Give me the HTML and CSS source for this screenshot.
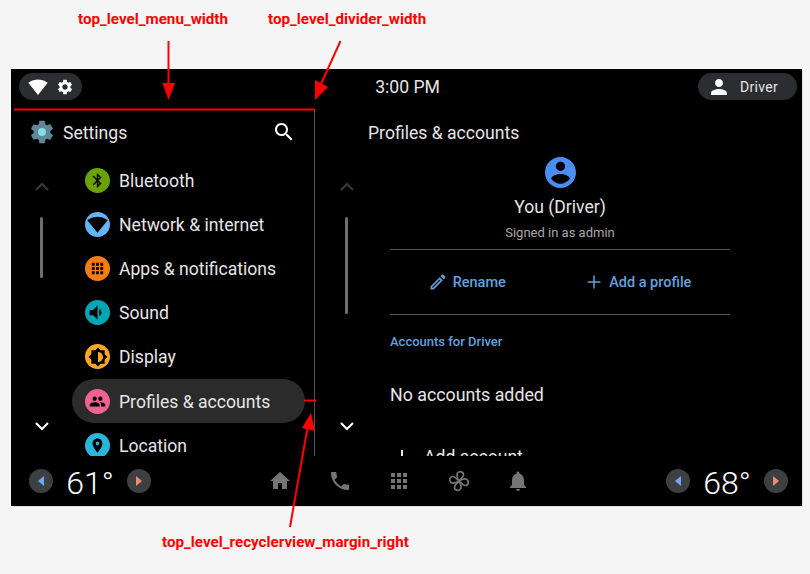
FILE: index.html
```html
<!DOCTYPE html>
<html lang="en">
<head>
<meta charset="utf-8">
<title>Settings layout</title>
<link rel="stylesheet" href="styles.css">
</head>
<body>
<main class="screen">
  <header class="topbar">
    <div class="pill status-pill">
      <svg class="icon-wifi" viewBox="0 0 24 24"><path d="M12.01 21.49L23.64 7c-.45-.34-4.93-4-11.64-4C5.28 3 .81 6.66.36 7l11.63 14.49.01.01.01-.01z"/></svg>
      <svg class="icon-gear" viewBox="0 0 24 24"><path d="M19.14 12.94c.04-.3.06-.61.06-.94 0-.32-.02-.64-.07-.94l2.03-1.58c.18-.14.23-.41.12-.61l-1.92-3.32c-.12-.22-.37-.29-.59-.22l-2.39.96c-.5-.38-1.03-.7-1.62-.94l-.36-2.54c-.04-.24-.24-.41-.48-.41h-3.84c-.24 0-.43.17-.47.41l-.36 2.54c-.59.24-1.13.57-1.62.94l-2.39-.96c-.22-.08-.47 0-.59.22L2.74 8.87c-.12.21-.08.47.12.61l2.03 1.58c-.05.3-.09.63-.09.94s.02.64.07.94l-2.03 1.58c-.18.14-.23.41-.12.61l1.92 3.32c.12.22.37.29.59.22l2.39-.96c.5.38 1.03.7 1.62.94l.36 2.54c.05.24.24.41.48.41h3.84c.24 0 .44-.17.47-.41l.36-2.54c.59-.24 1.13-.56 1.62-.94l2.39.96c.22.08.47 0 .59-.22l1.92-3.32c.12-.22.07-.47-.12-.61l-2.01-1.58zM12 15.6c-1.98 0-3.6-1.62-3.6-3.6s1.62-3.6 3.6-3.6 3.6 1.62 3.6 3.6-1.62 3.6-3.6 3.6z"/></svg>
    </div>
    <div class="clock">3:00 PM</div>
    <div class="pill driver-pill">
      <svg class="icon-person" viewBox="0 0 24 24"><path d="M12 12c2.21 0 4-1.79 4-4s-1.79-4-4-4-4 1.79-4 4 1.79 4 4 4zm0 2c-2.67 0-8 1.34-8 4v2h16v-2c0-2.66-5.33-4-8-4z"/></svg>
      <span>Driver</span>
    </div>
  </header>

  <div class="panes">
    <section class="menu">
      <div class="menu-head">
        <svg class="icon-settings" viewBox="0 0 24 24"><path d="M19.14 12.94c.04-.3.06-.61.06-.94 0-.32-.02-.64-.07-.94l2.03-1.58c.18-.14.23-.41.12-.61l-1.92-3.32c-.12-.22-.37-.29-.59-.22l-2.39.96c-.5-.38-1.03-.7-1.62-.94l-.36-2.54c-.04-.24-.24-.41-.48-.41h-3.84c-.24 0-.43.17-.47.41l-.36 2.54c-.59.24-1.13.57-1.62.94l-2.39-.96c-.22-.08-.47 0-.59.22L2.74 8.87c-.12.21-.08.47.12.61l2.03 1.58c-.05.3-.09.63-.09.94s.02.64.07.94l-2.03 1.58c-.18.14-.23.41-.12.61l1.92 3.32c.12.22.37.29.59.22l2.39-.96c.5.38 1.03.7 1.62.94l.36 2.54c.05.24.24.41.48.41h3.84c.24 0 .44-.17.47-.41l.36-2.54c.59-.24 1.13-.56 1.62-.94l2.39.96c.22.08.47 0 .59-.22l1.92-3.32c.12-.22.07-.47-.12-.61l-2.01-1.58z"/><circle class="settings-core" cx="12" cy="12" r="3.4"/></svg>
        <span class="menu-title">Settings</span>
        <svg class="icon-search" viewBox="0 0 24 24"><path d="M15.5 14h-.79l-.28-.27C15.41 12.59 16 11.11 16 9.5 16 5.91 13.09 3 9.5 3S3 5.91 3 9.5 5.91 16 9.5 16c1.61 0 3.09-.59 4.23-1.57l.27.28v.79l5 4.99L20.49 19l-4.99-5zm-6 0C7.01 14 5 11.99 5 9.5S7.01 5 9.5 5 14 7.01 14 9.5 11.99 14 9.5 14z"/></svg>
      </div>
      <div class="pane-body">
        <div class="rail">
          <svg class="chev chev-off" viewBox="0 0 24 24"><path d="M6 15l6-6 6 6"/></svg>
          <div class="track"><div class="thumb thumb-short"></div></div>
          <svg class="chev" viewBox="0 0 24 24"><path d="M6 9l6 6 6-6"/></svg>
        </div>
        <ul class="list">
          <li class="row"><span class="tile tile-bt"><svg viewBox="0 0 24 24"><path d="M17.71 7.71L12 2h-1v7.59L6.41 5 5 6.41 10.59 12 5 17.59 6.41 19 11 14.41V22h1l5.71-5.71-4.3-4.29 4.3-4.29zM13 5.83l1.88 1.88L13 9.59V5.83zm1.88 10.46L13 18.17v-3.76l1.88 1.88z"/></svg></span><span class="row-label">Bluetooth</span></li>
          <li class="row"><span class="tile tile-net"><svg viewBox="0 0 24 24"><path d="M12.01 21.49L23.64 7c-.45-.34-4.93-4-11.64-4C5.28 3 .81 6.66.36 7l11.63 14.49.01.01.01-.01z"/></svg></span><span class="row-label">Network &amp; internet</span></li>
          <li class="row"><span class="tile tile-apps"><svg viewBox="0 0 24 24"><path d="M4 8h4V4H4v4zm6 12h4v-4h-4v4zm-6 0h4v-4H4v4zm0-6h4v-4H4v4zm6 0h4v-4h-4v4zm6-10v4h4V4h-4zm-6 4h4V4h-4v4zm6 6h4v-4h-4v4zm0 6h4v-4h-4v4z"/></svg></span><span class="row-label">Apps &amp; notifications</span></li>
          <li class="row"><span class="tile tile-sound"><svg viewBox="0 0 24 24"><path d="M3 9v6h4l5 5V4L7 9H3zm13.5 3c0-1.77-1.02-3.29-2.5-4.03v8.05c1.48-.73 2.5-2.25 2.5-4.02z"/></svg></span><span class="row-label">Sound</span></li>
          <li class="row"><span class="tile tile-display"><svg viewBox="0 0 24 24"><path d="M20 15.31L23.31 12 20 8.69V4h-4.69L12 .69 8.69 4H4v4.69L.69 12 4 15.31V20h4.69L12 23.31 15.31 20H20v-4.69zM12 18V6c3.31 0 6 2.69 6 6s-2.69 6-6 6z"/></svg></span><span class="row-label">Display</span></li>
          <li class="row row-active"><span class="tile tile-profile"><svg viewBox="0 0 24 24"><path d="M16 11c1.66 0 2.99-1.34 2.99-3S17.66 5 16 5c-1.66 0-3 1.34-3 3s1.34 3 3 3zm-8 0c1.66 0 2.99-1.34 2.99-3S9.66 5 8 5C6.34 5 5 6.34 5 8s1.34 3 3 3zm0 2c-2.33 0-7 1.17-7 3.5V19h14v-2.5c0-2.33-4.67-3.5-7-3.5zm8 0c-.29 0-.62.02-.97.05 1.16.84 1.97 1.97 1.97 3.45V19h6v-2.5c0-2.33-4.67-3.5-7-3.5z"/></svg></span><span class="row-label">Profiles &amp; accounts</span></li>
          <li class="row"><span class="tile tile-loc"><svg viewBox="0 0 24 24"><path d="M12 2C8.13 2 5 5.13 5 9c0 5.25 7 13 7 13s7-7.75 7-13c0-3.87-3.13-7-7-7zm0 9.5c-1.38 0-2.5-1.12-2.5-2.5s1.12-2.5 2.5-2.5 2.5 1.12 2.5 2.5-1.12 2.5-2.5 2.5z"/></svg></span><span class="row-label">Location</span></li>
        </ul>
      </div>
    </section>

    <section class="detail">
      <h1 class="detail-title">Profiles &amp; accounts</h1>
      <div class="pane-body">
        <div class="rail">
          <svg class="chev chev-off" viewBox="0 0 24 24"><path d="M6 15l6-6 6 6"/></svg>
          <div class="track"><div class="thumb thumb-long"></div></div>
          <svg class="chev" viewBox="0 0 24 24"><path d="M6 9l6 6 6-6"/></svg>
        </div>
        <div class="content">
          <div class="profile">
            <svg class="avatar" viewBox="2 2 20 20"><path d="M12 2C6.48 2 2 6.48 2 12s4.48 10 10 10 10-4.48 10-10S17.52 2 12 2zm0 3c1.66 0 3 1.34 3 3s-1.34 3-3 3-3-1.34-3-3 1.34-3 3-3zm0 14.2c-2.5 0-4.71-1.28-6-3.22.03-1.99 4-3.08 6-3.08 1.99 0 5.97 1.09 6 3.08-1.29 1.94-3.5 3.22-6 3.22z"/></svg>
            <div class="profile-name">You (Driver)</div>
            <div class="profile-sub">Signed in as admin</div>
          </div>
          <div class="actions">
            <div class="action"><svg class="icon-pencil" viewBox="0 0 24 24"><path d="M3 17.25V21h3.75L17.81 9.94l-3.75-3.75L3 17.25zM5.92 19H5v-.92l9.06-9.06.92.92L5.92 19zM20.71 7.04c.39-.39.39-1.02 0-1.41l-2.34-2.34c-.39-.39-1.02-.39-1.41 0l-1.83 1.83 3.75 3.75 1.83-1.83z"/></svg>Rename</div>
            <div class="action"><svg class="icon-plus" viewBox="0 0 24 24"><path d="M19 12.800h-6.200V19h-1.600v-6.200H5v-1.600h6.200V5h1.600v6.200H19z"/></svg>Add a profile</div>
          </div>
          <div class="section-label">Accounts for Driver</div>
          <div class="empty">No accounts added</div>
          <div class="add-account"><svg viewBox="0 0 24 24"><path d="M19 13h-6v6h-2v-6H5v-2h6V5h2v6h6v2z"/></svg>Add account</div>
        </div>
      </div>
    </section>
  </div>

  <footer class="bottombar">
    <div class="temp">
      <span class="temp-btn"><i class="tri tri-left"></i></span>
      <span class="temp-val">61°</span>
      <span class="temp-btn"><i class="tri tri-right"></i></span>
    </div>
    <nav class="nav">
      <svg viewBox="0 0 24 24"><path d="M10 20v-6h4v6h5v-8h3L12 3 2 12h3v8z"/></svg>
      <svg viewBox="0 0 24 24"><path d="M6.62 10.79c1.44 2.83 3.76 5.14 6.59 6.59l2.2-2.2c.27-.27.67-.36 1.02-.24 1.12.37 2.33.57 3.57.57.55 0 1 .45 1 1V20c0 .55-.45 1-1 1-9.39 0-17-7.61-17-17 0-.55.45-1 1-1h3.5c.55 0 1 .45 1 1 0 1.25.2 2.45.57 3.57.11.35.03.74-.25 1.02l-2.2 2.2z"/></svg>
      <svg viewBox="0 0 24 24"><path d="M4 8h4V4H4v4zm6 12h4v-4h-4v4zm-6 0h4v-4H4v4zm0-6h4v-4H4v4zm6 0h4v-4h-4v4zm6-10v4h4V4h-4zm-6 4h4V4h-4v4zm6 6h4v-4h-4v4zm0 6h4v-4h-4v4z"/></svg>
      <svg class="fan" viewBox="0 0 24 24"><path d="M12 12C10.500 9.500 9 6.500 10.500 4 12.300 1.800 16.500 2.500 16.500 5.800 16.500 8.500 13.500 9.800 12 12z"/><path transform="rotate(90 12 12)" d="M12 12C10.500 9.500 9 6.500 10.500 4 12.300 1.800 16.500 2.500 16.500 5.800 16.500 8.500 13.500 9.800 12 12z"/><path transform="rotate(180 12 12)" d="M12 12C10.500 9.500 9 6.500 10.500 4 12.300 1.800 16.500 2.500 16.500 5.800 16.500 8.500 13.500 9.800 12 12z"/><path transform="rotate(270 12 12)" d="M12 12C10.500 9.500 9 6.500 10.500 4 12.300 1.800 16.500 2.500 16.500 5.800 16.500 8.500 13.500 9.800 12 12z"/></svg>
      <svg viewBox="0 0 24 24"><path d="M12 22c1.1 0 2-.9 2-2h-4c0 1.1.89 2 2 2zm6-6v-5c0-3.07-1.64-5.64-4.5-6.32V4c0-.83-.67-1.5-1.5-1.5s-1.5.67-1.5 1.5v.68C7.63 5.36 6 7.92 6 11v5l-2 2v1h16v-1l-2-2z"/></svg>
    </nav>
    <div class="temp temp-end">
      <span class="temp-btn"><i class="tri tri-left"></i></span>
      <span class="temp-val">68°</span>
      <span class="temp-btn"><i class="tri tri-right"></i></span>
    </div>
  </footer>
</main>

<div class="note note-menu">top_level_menu_width</div>
<div class="note note-divider">top_level_divider_width</div>
<div class="note note-margin">top_level_recyclerview_margin_right</div>
<svg class="marks" viewBox="0 0 810 574">
  <path class="mark-line" d="M168.500 41V85"/>
  <path class="mark-head" d="M162.500 83H175L168.500 100z"/>
  <path class="mark-line" d="M340.500 41L321 84"/>
  <path class="mark-head" d="M315 80L328 87L315 100z"/>
  <path class="mark-line" d="M14 109.500H315"/>
  <path class="mark-line" d="M304 400.500H316"/>
  <path class="mark-line" d="M290 527L308 425"/>
  <path class="mark-head" d="M302 428L315 431L311 413z"/>
</svg>
</body>
</html>
```

FILE: styles.css
```css
* { box-sizing: border-box; }

html, body { margin: 0; padding: 0; }

body {
  position: relative;
  width: 810px;
  height: 574px;
  overflow: hidden;
  background: #f5f5f5;
  font-family: Roboto, "Liberation Sans", sans-serif;
  color: #e6e6e6;
}

.screen {
  display: flex;
  flex-direction: column;
  width: 791px;
  height: 437px;
  margin: 0 0 0 11px;
  position: relative;
  top: 69px;
  background: #000;
  box-shadow: 1px 1px 0 #e0e0e0;
}

/* top bar */
.topbar {
  flex: none;
  height: 41px;
  padding: 4px 5px 0 8px;
  display: grid;
  grid-template-columns: 1fr auto 1fr;
  align-items: start;
}

.pill {
  height: 27px;
  border-radius: 14px;
  background: #2b2d30;
  display: flex;
  align-items: center;
}

.status-pill {
  width: 63px;
  padding-left: 9px;
  gap: 8px;
}

.icon-wifi { width: 20px; height: 20px; fill: #fff; }
.icon-gear { width: 18px; height: 18px; fill: #fff; }

.clock {
  font-size: 17.600px;
  line-height: 29px;
  padding-right: 1px;
}

.driver-pill {
  width: 99px;
  justify-self: end;
  padding-left: 9px;
  gap: 9px;
  font-size: 14px;
  letter-spacing: 0.3px;
}

.icon-person { width: 24px; height: 24px; fill: #fff; }

/* panes */
.panes {
  flex: 1;
  min-height: 0;
  display: flex;
}

.menu {
  flex: none;
  width: 304px;
  display: flex;
  flex-direction: column;
  border-right: 1px solid #555;
}

.menu-head {
  flex: none;
  height: 48px;
  padding: 0 18px 4px 16.500px;
  display: flex;
  align-items: center;
}

.icon-settings { width: 28px; height: 28px; fill: #5f8797; flex: none; }
.settings-core { fill: #85dfe0; }

.menu-title {
  margin-left: 7.500px;
  padding-top: 2px;
  font-size: 17.600px;
  flex: 1;
}

.icon-search { width: 24px; height: 24px; fill: #fff; }

.pane-body {
  flex: 1;
  min-height: 0;
  display: flex;
  overflow: hidden;
}

.rail {
  flex: none;
  width: 61px;
  padding: 17px 0 18px;
  display: flex;
  flex-direction: column;
  align-items: center;
}

.chev {
  flex: none;
  width: 24px;
  height: 24px;
  fill: none;
  stroke: #fff;
  stroke-width: 2;
}

.chev-off { stroke: #3a3a3a; }

.track {
  flex: 1;
  width: 3px;
  margin: 18px 0;
}

.thumb {
  width: 3px;
  border-radius: 2px;
  background: #6e6e6e;
}

.thumb-short { height: 61px; }
.thumb-long { height: 97px; }

.list {
  flex: 1;
  margin: 0 9px 0 0;
  padding: 0;
  list-style: none;
}

.row {
  height: 44.200px;
  padding-left: 13px;
  display: flex;
  align-items: center;
  gap: 9px;
  font-size: 17.600px;
  border-radius: 22px;
}

.row-label { padding-top: 1px; }

.row-active { background: #2b2b2b; }

.tile {
  flex: none;
  width: 25px;
  height: 25px;
  border-radius: 50%;
  display: flex;
  align-items: center;
  justify-content: center;
}

.tile svg { width: 17px; height: 17px; fill: #000; }
.tile-bt { background: #6aa300; }
.tile-net { background: #64b5f6; }
.tile-net svg { width: 21px; height: 21px; }
.tile-apps { background: #f57c14; }
.tile-sound { background: #00a6b4; }
.tile-sound svg { width: 21px; height: 21px; }
.tile-display { background: #f9a825; }
.tile-display svg { width: 20px; height: 20px; }
.tile-profile { background: #f06292; }
.tile-loc { background: #29b6d8; }

/* detail */
.detail {
  flex: 1;
  min-width: 0;
  display: flex;
  flex-direction: column;
}

.detail-title {
  flex: none;
  height: 47px;
  margin: 0;
  padding: 0 0 2px 53px;
  font-size: 17.600px;
  font-weight: 400;
  display: flex;
  align-items: center;
}

.detail .rail { width: 63px; }
.detail .pane-body .rail { padding-top: 18px; }

.content {
  width: 352px;
  padding-left: 12px;
  height: 100%;
  overflow: hidden;
}

.profile {
  width: 340px;
  height: 93px;
  display: flex;
  flex-direction: column;
  align-items: center;
  border-bottom: 1px solid #555;
}

.avatar { width: 31px; height: 31px; fill: #4a8ef2; flex: none; }

.profile-name {
  margin-top: 7px;
  font-size: 17.600px;
  line-height: 24px;
}

.profile-sub {
  margin-top: 4.500px;
  font-size: 13px;
  line-height: 18px;
  color: #a8a8a8;
}

.actions {
  width: 340px;
  height: 65px;
  display: grid;
  grid-template-columns: 1fr 1fr;
  border-bottom: 1px solid #555;
}

.action {
  padding-right: 16px;
  display: flex;
  align-items: center;
  justify-content: center;
  gap: 4.500px;
  font-size: 14.500px;
  font-weight: 500;
  color: #64a0de;
}

.icon-pencil { width: 20px; height: 20px; fill: #64a0de; }
.icon-plus { width: 22px; height: 22px; fill: #64a0de; }

.section-label {
  margin-top: 19px;
  font-size: 13px;
  line-height: 16px;
  font-weight: 500;
  color: #64a0de;
}

.empty {
  margin-top: 33px;
  font-size: 17.800px;
  line-height: 24px;
}

.add-account {
  margin-top: 38px;
  display: flex;
  align-items: center;
  gap: 10px;
  font-size: 17.600px;
  line-height: 24px;
}

.add-account svg { width: 24px; height: 24px; fill: #e6e6e6; }

/* bottom bar */
.bottombar {
  flex: none;
  height: 50px;
  padding: 0 14px 0 18px;
  display: flex;
  align-items: center;
}

.temp {
  width: 122px;
  display: flex;
  align-items: center;
  justify-content: space-between;
}

.temp-end { margin-left: auto; }

.temp-btn {
  width: 24px;
  height: 24px;
  border-radius: 50%;
  background: #3c4043;
  display: flex;
  align-items: center;
  justify-content: center;
}

.tri {
  display: block;
  width: 0;
  height: 0;
  border-top: 5px solid transparent;
  border-bottom: 5px solid transparent;
}

.tri-left { border-right: 6px solid #6ea8f0; }
.tri-right { border-left: 6px solid #ee8a72; }

.temp-val {
  padding-top: 3px;
  font-size: 32px;
  font-weight: 300;
  line-height: 36px;
  color: #fff;
}

.nav {
  margin-left: 117px;
  display: flex;
  gap: 35.500px;
}

.nav svg { width: 24px; height: 24px; fill: #757575; }

.nav .fan {
  fill: none;
  stroke: #757575;
  stroke-width: 1.700;
}

/* annotations */
.note {
  position: absolute;
  font-size: 15.200px;
  font-weight: 700;
  line-height: 18px;
  color: #f00;
  white-space: nowrap;
}

.note-menu { left: 78px; top: 10px; }
.note-divider { left: 268px; top: 10px; }
.note-margin { left: 162px; top: 533px; }

.marks {
  position: absolute;
  left: 0;
  top: 0;
  width: 810px;
  height: 574px;
  pointer-events: none;
}

.mark-line { fill: none; stroke: #f00; stroke-width: 2; }
.mark-head { fill: #f00; }
```
